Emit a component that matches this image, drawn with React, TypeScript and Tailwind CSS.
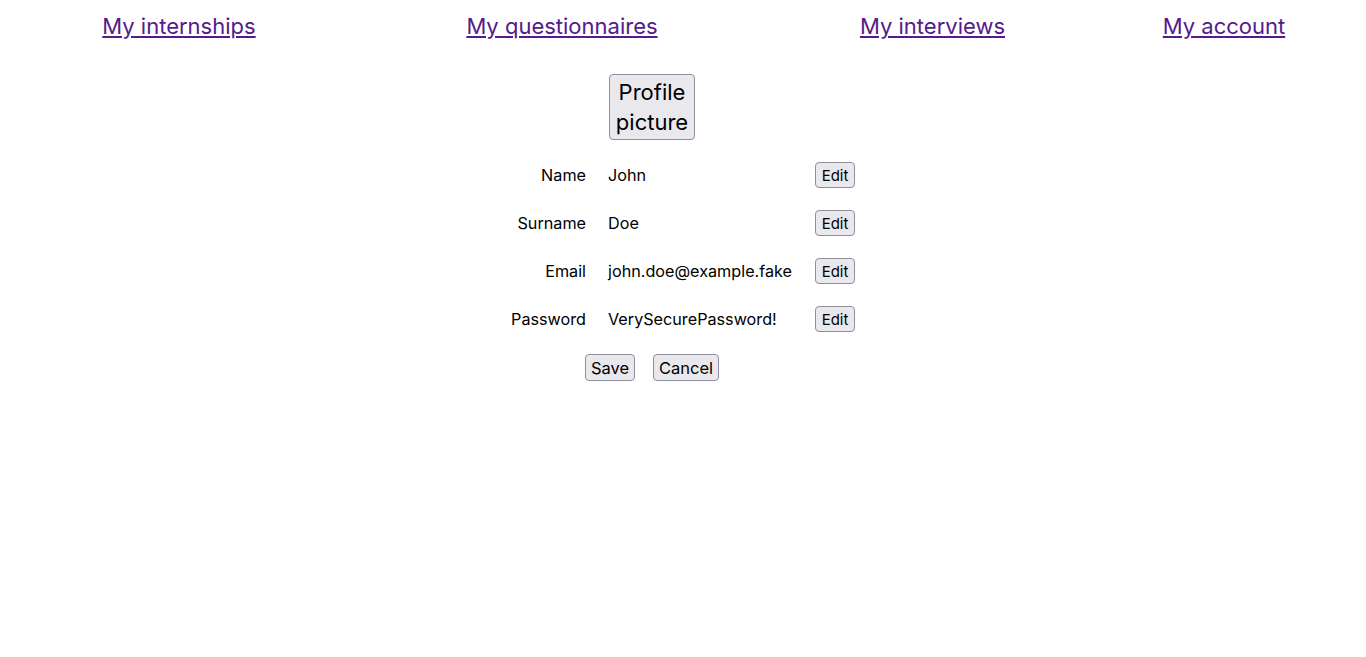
import React from "react";

const btn =
  "bg-[#e9e9ed] border border-[#8f8f9d] rounded-[4px] text-black";

function Row({ label, value }: { label: string; value: string }) {
  return (
    <div className="flex items-center h-[48px] leading-[20px]">
      <div className="w-[75px] text-right">{label}</div>
      <div className="w-[229px] pl-[22px]">{value}</div>
      <button className={`${btn} w-[40px] h-[26px] text-[15px] leading-[20px] pt-[2px]`}>Edit</button>
    </div>
  );
}

export default function App() {
  return (
    <div
      className="min-h-[657px] bg-white text-black text-[16.2px]"
      style={{ fontFamily: "Inter, 'Noto Sans', sans-serif" }}
    >
      <nav className="grid grid-cols-[358px_408px_333px_250px] pt-[11px] text-[22px] leading-[30px]">
        <div className="text-center">
          <a href="#" className="underline text-[#551a8b]">My internships</a>
        </div>
        <div className="text-center">
          <a href="#" className="underline text-[#551a8b]">My questionnaires</a>
        </div>
        <div className="text-center">
          <a href="#" className="underline text-[#551a8b]">My interviews</a>
        </div>
        <div className="text-center">
          <a href="#" className="underline text-[#551a8b]">My account</a>
        </div>
      </nav>
      <div className="flex justify-center mt-[33px]">
        <div className="w-[344px] flex flex-col">
          <div className="pl-[98px]">
            <button className={`${btn} w-[86px] h-[66px] text-[22px] leading-[30px]`}>
              Profile
              <br />
              picture
            </button>
          </div>
          <div className="mt-[11px]">
            <Row label="Name" value="John" />
            <Row label="Surname" value="Doe" />
            <Row label="Email" value="john.doe@example.fake" />
            <Row label="Password" value="VerySecurePassword!" />
          </div>
          <div className="flex gap-[18px] pl-[74px] mt-[11px]">
            <button className={`${btn} w-[50px] h-[27px] text-[16.5px] leading-[22px]`}>Save</button>
            <button className={`${btn} w-[66px] h-[27px] text-[16.5px] leading-[22px]`}>Cancel</button>
          </div>
        </div>
      </div>
    </div>
  );
}
